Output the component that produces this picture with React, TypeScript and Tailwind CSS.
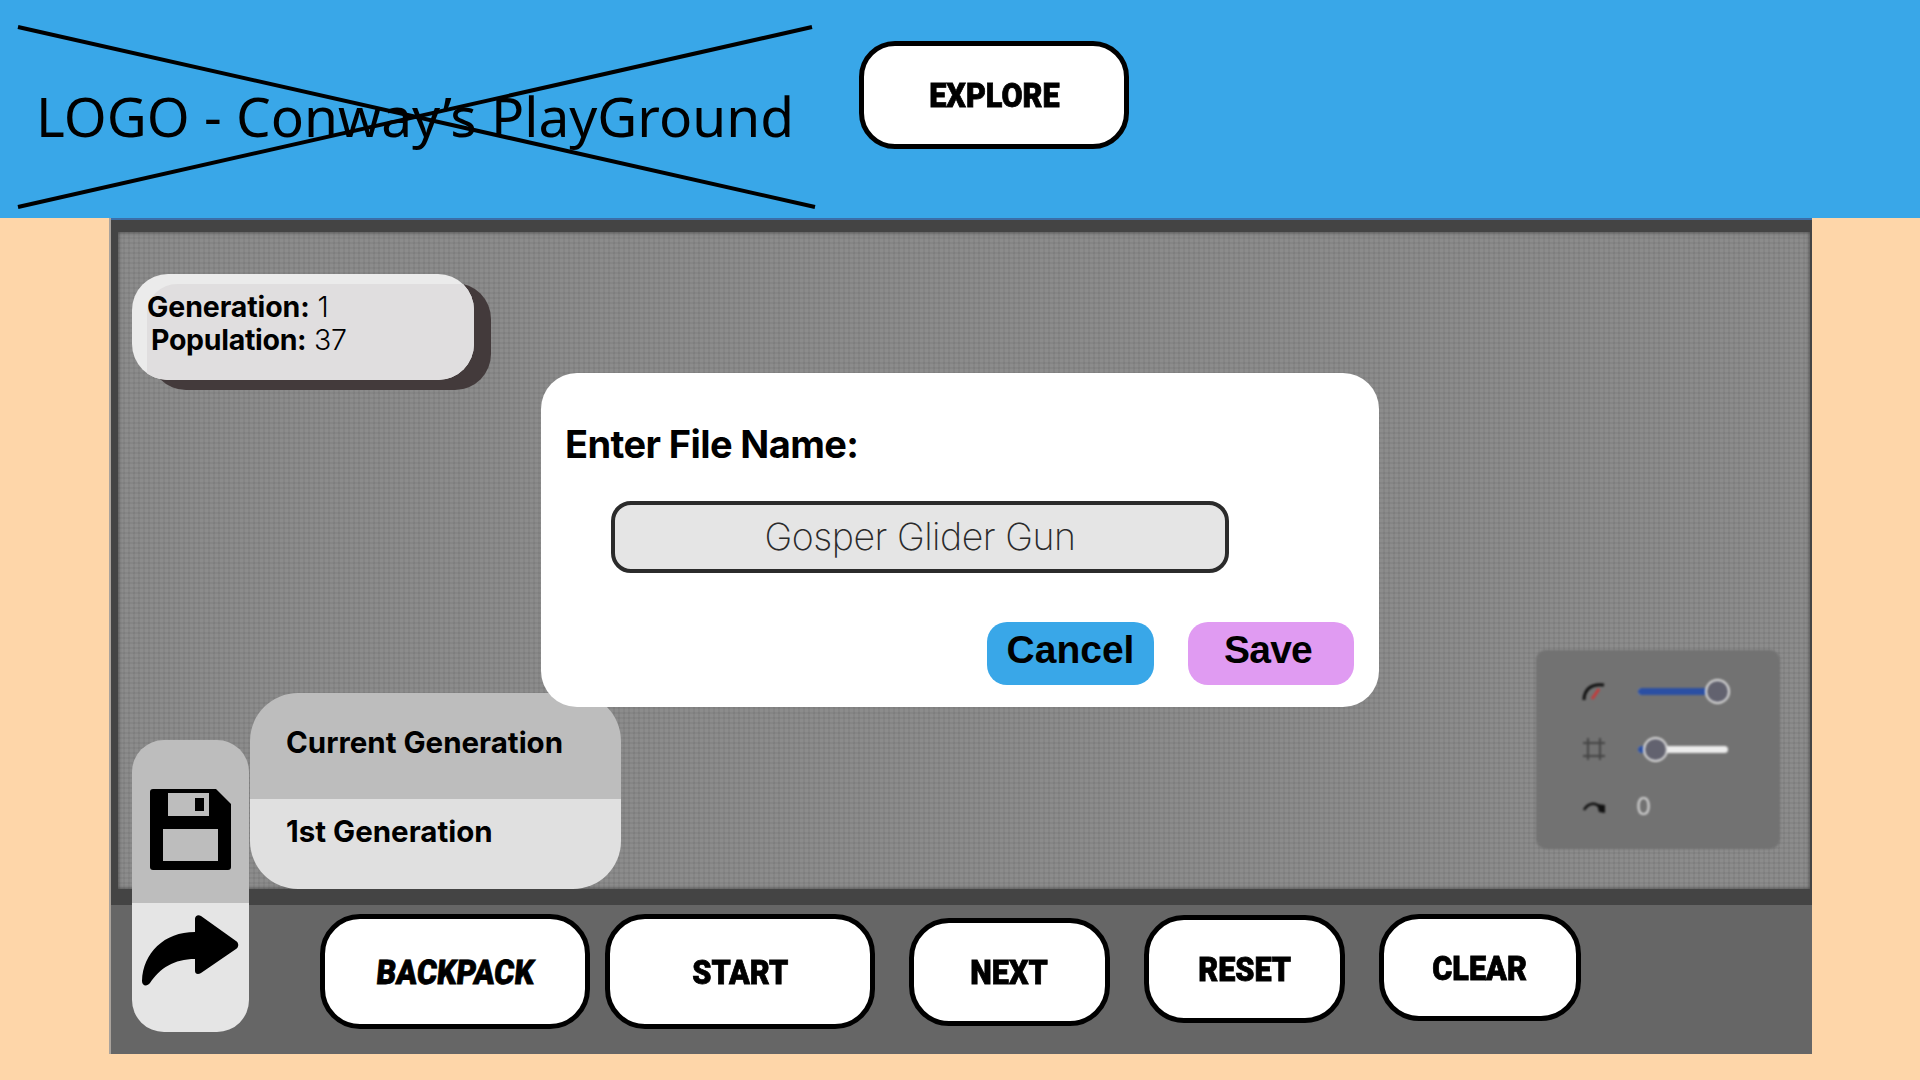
const block = { fontFamily: '"Roboto", "Liberation Sans", sans-serif' };

function ChunkyButton({ label, className, textClass }: { label: string; className: string; textClass: string }) {
  return (
    <button className={`flex items-center justify-center bg-white border-[5px] border-black shrink-0 ${className}`}>
      <span style={block} className={`block text-black font-black leading-none [-webkit-text-stroke:0.8px_black] ${textClass}`}>{label}</span>
    </button>
  );
}

function Floppy() {
  return (
    <svg width="81" height="81" viewBox="0 0 81 81">
      <path d="M3 0H66L81 15V78a3 3 0 0 1-3 3H3a3 3 0 0 1-3-3V3a3 3 0 0 1 3-3Z" fill="#000" />
      <rect x="18" y="4" width="41" height="23" fill="#bdbdbd" />
      <rect x="45" y="9" width="9" height="13" fill="#000" />
      <rect x="13" y="40" width="55" height="32" fill="#bdbdbd" />
    </svg>
  );
}

function Arrow() {
  return (
    <svg width="97" height="71" viewBox="0 0 97 71">
      <path
        d="M53 4C53 1 56 -1 59 1L94 26C97 28 97 32 94 34L59 58C56 60 53 59 53 56V44C32 44 18 53 8 68C5 72 0 71 0 66C1 38 22 17 53 17Z"
        fill="#000"
      />
    </svg>
  );
}

function Slider({ fill, knob }: { fill: string; knob: string }) {
  return (
    <div className="relative h-[7px] w-[90px] rounded-full bg-[#ececec]">
      <div className={`h-full rounded-full bg-[#2b4fa3] ${fill}`} />
      <div className={`absolute top-[-9px] h-[25px] w-[25px] rounded-full bg-[#62626f] border-2 border-[#dcdcdc] ${knob}`} />
    </div>
  );
}

export default function App() {
  return (
    <div className="w-[1920px] h-[1080px] overflow-hidden bg-[#fed6a9]">
      <header className="h-[218px] bg-[#39a7e8] flex items-start">
        <div className="relative w-[859px] h-full shrink-0">
          <h1
            style={{ fontFamily: '"Noto Sans", sans-serif' }}
            className="pl-[36px] pt-[81px] text-[55px] leading-[70px] font-normal text-black whitespace-nowrap"
          >
            LOGO - Conway’s PlayGround
          </h1>
          <svg className="absolute inset-0" width="859" height="218">
            <line x1="18" y1="27" x2="815" y2="207" stroke="#000" strokeWidth="4" />
            <line x1="18" y1="207" x2="812" y2="27" stroke="#000" strokeWidth="4" />
          </svg>
        </div>
        <ChunkyButton label="EXPLORE" className="mt-[41px] w-[270px] h-[108px] rounded-[36px]" textClass="text-[34px] scale-x-[0.9]" />
      </header>

      <main className="relative ml-[109px] w-[1703px] h-[836px] flex flex-col bg-[#666666] border-l-2 border-[#aaa39c]">
        <div className="h-[2px] shrink-0 bg-[#3b6ea8]" />
        <div className="h-[685px] shrink-0 border-t-[12px] border-b-[16px] border-l-[7px] border-r-2 border-[#444444] shadow-[inset_0_0_4px_#444444] bg-[#888888] bg-[repeating-linear-gradient(0deg,rgba(0,0,0,0.035)_0px,rgba(0,0,0,0.035)_2px,rgba(255,255,255,0.02)_2px,rgba(255,255,255,0.02)_5px),repeating-linear-gradient(90deg,rgba(0,0,0,0.035)_0px,rgba(0,0,0,0.035)_2px,rgba(255,255,255,0.02)_2px,rgba(255,255,255,0.02)_5px)]" />

        <div className="flex-1 flex items-start pl-[209px]">
          <ChunkyButton label="BACKPACK" className="mt-[9px] w-[270px] h-[115px] rounded-[40px] mr-[15px]" textClass="text-[34px] -skew-x-6 scale-x-[0.9]" />
          <ChunkyButton label="START" className="mt-[9px] w-[270px] h-[115px] rounded-[40px] mr-[34px]" textClass="text-[34px] scale-x-[0.9]" />
          <ChunkyButton label="NEXT" className="mt-[13px] w-[201px] h-[108px] rounded-[40px] mr-[34px]" textClass="text-[34px] scale-x-[0.9]" />
          <ChunkyButton label="RESET" className="mt-[10px] w-[201px] h-[108px] rounded-[40px] mr-[34px]" textClass="text-[34px] scale-x-[0.9]" />
          <ChunkyButton label="CLEAR" className="mt-[9px] w-[202px] h-[107px] rounded-[40px]" textClass="text-[34px] scale-x-[0.9]" />
        </div>

        {/* Stats */}
        <div className="absolute left-[39px] top-[65px] w-[341px] h-[107px] rounded-[36px] bg-[#433a3b]" />
        <div
          style={{ fontFamily: 'Inter, sans-serif' }}
          className="absolute left-[21px] top-[56px] w-[342px] h-[106px] rounded-[36px] bg-[#ebebeb] overflow-hidden"
        >
          <div className="ml-[15px] mt-[10px] h-full rounded-tl-[30px] bg-[#e0dedf] text-black text-[28.5px] leading-[33px] pt-[6px]">
            <p className="tracking-[-0.1px]"><b className="font-bold">Generation:</b> <span className="font-light">1</span></p>
            <p className="pl-[4px] tracking-[-0.3px]"><b className="font-bold">Population:</b> <span className="font-light">37</span></p>
          </div>
        </div>

        {/* Save column */}
        <div className="absolute left-[21px] top-[522px] w-[117px] h-[292px] rounded-[32px] overflow-hidden flex flex-col">
          <div className="h-[163px] bg-[#bdbdbd] flex items-start justify-center pt-[49px]"><Floppy /></div>
          <div className="flex-1 bg-[#e5e5e5] flex items-start pl-[10px] pt-[12px]"><Arrow /></div>
        </div>

        {/* Generation menu */}
        <div
          style={{ fontFamily: 'Inter, sans-serif' }}
          className="absolute left-[139px] top-[475px] w-[371px] h-[196px] rounded-[48px] overflow-hidden flex flex-col text-black font-bold text-[29.5px]"
        >
          <div className="h-[106px] bg-[#bdbdbd] pl-[36px] pt-[31px] leading-[36px]">Current Generation</div>
          <div className="flex-1 bg-[#e0e0e0] pl-[36px] pt-[14px] leading-[36px]">1st Generation</div>
        </div>

        {/* Settings */}
        <div className="absolute left-[1425px] top-[432px] w-[244px] h-[199px] rounded-[10px] bg-[#727272] pl-[46px] pt-[12px] blur-[1px]">
          <div className="h-[58px] flex items-center gap-[32px]">
            <svg width="24" height="24" viewBox="0 0 24 24" fill="none">
              <path d="M2 21C2 11 9 4 22 6" stroke="#111" strokeWidth="3" />
              <path d="M10 20L17 10" stroke="#c63a3a" strokeWidth="3" />
            </svg>
            <Slider fill="w-[80px]" knob="left-[67px]" />
          </div>
          <div className="h-[58px] flex items-center gap-[32px]">
            <svg width="24" height="24" viewBox="0 0 24 24" fill="none" stroke="#444" strokeWidth="2">
              <path d="M6 1V23M18 1V23M1 6H23M1 19H23" />
            </svg>
            <Slider fill="w-[8px]" knob="left-[5px]" />
          </div>
          <div className="h-[58px] flex items-center gap-[30px]">
            <svg width="24" height="24" viewBox="0 0 24 24" fill="none">
              <path d="M2 15C6 8 13 7 18 12" stroke="#111" strokeWidth="2.5" />
              <path d="M15 9L23 10V18L17 17Z" fill="#111" />
            </svg>
            <span style={{ fontFamily: 'Inter, sans-serif' }} className="text-[24px] text-[#d4d4d4] leading-none">0</span>
          </div>
        </div>

        {/* Dialog */}
        <div className="absolute left-[430px] top-[155px] w-[838px] h-[334px] rounded-[36px] bg-white">
          <h2 style={{ fontFamily: 'Inter, sans-serif' }} className="ml-[24px] mt-[49px] text-[38px] leading-[44px] font-bold tracking-[-0.6px] text-black">Enter File Name:</h2>
          <div className="ml-[70px] mt-[35px] w-[618px] h-[72px] rounded-[20px] border-4 border-[#2b2b2b] bg-[#e5e5e5] flex items-center justify-center">
            <span style={{ fontFamily: 'Inter, sans-serif' }} className="text-[37.5px] font-extralight text-[#2b2b2b] tracking-[-0.5px]">Gosper Glider Gun</span>
          </div>
          <div className="mt-[49px] ml-[446px] flex gap-[34px]">
            <button style={{ fontFamily: '"Liberation Sans", sans-serif' }} className="w-[167px] h-[63px] rounded-[20px] bg-[#39a7e8] font-bold text-[39px] leading-none text-black pb-[8px]">Cancel</button>
            <button style={{ fontFamily: '"Liberation Sans", sans-serif' }} className="w-[166px] h-[63px] rounded-[20px] bg-[#e09bf2] font-bold text-[39px] leading-none tracking-[-0.8px] text-black pb-[8px] pr-[6px]">Save</button>
          </div>
        </div>
      </main>
    </div>
  );
}
